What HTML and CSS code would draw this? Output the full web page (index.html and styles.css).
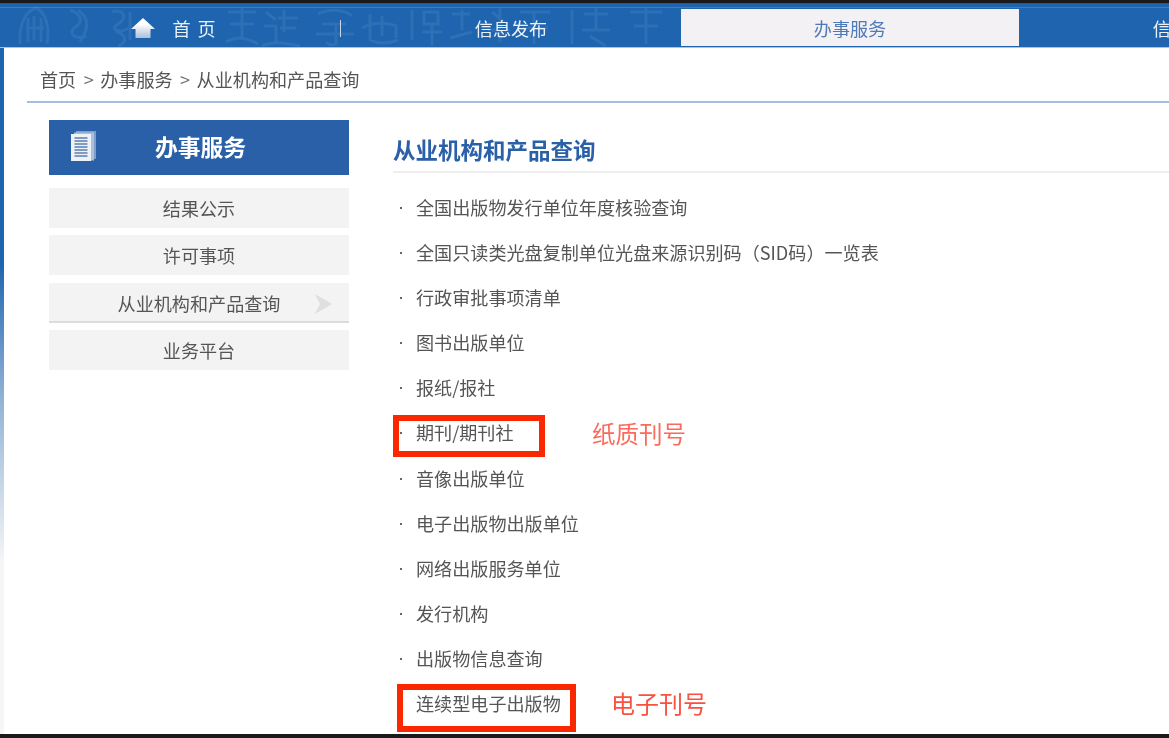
FILE: index.html
```html
<!DOCTYPE html>
<html lang="zh-CN">
<head>
<meta charset="utf-8">
<title>从业机构和产品查询</title>
<link rel="stylesheet" href="styles.css">
</head>
<body>
<div class="edge-top"></div>
<div class="page">
  <nav class="nav">
    <svg class="nav-decor" width="680" height="44" viewBox="0 0 680 44" aria-hidden="true">
      <path d="M20 40C19 22 24 8 36 4C46 8 50 24 47 40M28 14V38M34 12V36M41 14V38M26 24H44" />
      <path d="M70 6C82 10 84 18 74 24C68 30 76 36 86 32M78 6C90 14 88 26 80 38" />
      <path d="M112 8C124 4 128 14 118 20C108 26 122 30 128 24M116 28C126 30 128 38 118 42M130 8V36" />
      <path d="M228 8H256M242 4V34M230 20H254M226 38C236 32 248 34 258 40" />
      <path d="M266 8L276 16M264 22H276V38M262 42C276 36 290 40 300 42M284 6V28M278 14H298M280 24H296" />
      <path d="M318 10C330 4 346 6 352 12M322 20H346M336 20V40C332 42 328 40 326 38M316 30H354" />
      <path d="M362 24C372 18 388 18 396 22V34M370 10V36C378 40 388 40 398 36M382 12V32" />
      <path d="M412 6V36M424 8H438V20H424ZM422 28H442M432 20V42M452 10H470M462 6V26M450 34L472 28" />
      <path d="M492 8L504 18M500 4V38M488 26H510M520 8H550M534 8V40M522 24H548" />
      <path d="M572 6V40M584 10H608M596 4V26M582 26H610M590 32L606 42M630 8H662M646 4V40M634 22H658" />
    </svg>
    <a class="nav-item nav-home">
      <svg class="home-icon" width="24" height="20" viewBox="0 0 24 20">
        <defs><linearGradient id="hg" x1="0" y1="0" x2="0" y2="1"><stop offset="0.3" stop-color="#ffffff"/><stop offset="1" stop-color="#aebfd8"/></linearGradient></defs>
        <path d="M12 0 L24 11 L19.500 11 L19.500 20 L4.500 20 L4.500 11 L0 11 Z" fill="url(#hg)"/>
      </svg>
      <span class="home-text">首页</span>
    </a>
    <a class="nav-item">信息发布</a>
    <a class="nav-item nav-active">办事服务</a>
    <a class="nav-item">信息公开</a>
  </nav>
  <main class="content">
    <div class="crumbs"><span>首页</span><span class="sep">&gt;</span><span>办事服务</span><span class="sep">&gt;</span><span>从业机构和产品查询</span></div>
    <div class="columns">
      <aside class="side">
        <div class="side-head">
          <svg class="doc-icon" width="28" height="32" viewBox="0 0 28 32">
            <rect x="6" y="1" width="20" height="28" fill="#7f9fc9"/>
            <rect x="4" y="2.500" width="20" height="28" fill="#a9bfdc"/>
            <rect x="1" y="4" width="20" height="27" fill="#eef1f5"/>
            <path d="M4.500 8h13M4.500 11h13M4.500 14h13M4.500 17h13M4.500 20h13M4.500 23h13M4.500 26h13" stroke="#5b7fb0" stroke-width="1.500"/>
          </svg>
          <span class="side-title">办事服务</span>
        </div>
        <a class="side-item">结果公示</a>
        <a class="side-item">许可事项</a>
        <a class="side-item side-current">从业机构和产品查询
          <svg class="side-arrow" width="17" height="20" viewBox="0 0 17 20"><path d="M0 0 L17 10 L0 20 L5 10 Z" fill="#dfdfdf"/></svg>
        </a>
        <a class="side-item">业务平台</a>
      </aside>
      <section class="main">
        <h2 class="main-title">从业机构和产品查询</h2>
        <ul class="list">
          <li>全国出版物发行单位年度核验查询</li>
          <li>全国只读类光盘复制单位光盘来源识别码（SID码）一览表</li>
          <li>行政审批事项清单</li>
          <li>图书出版单位</li>
          <li>报纸/报社</li>
          <li>期刊/期刊社</li>
          <li>音像出版单位</li>
          <li>电子出版物出版单位</li>
          <li>网络出版服务单位</li>
          <li>发行机构</li>
          <li>出版物信息查询</li>
          <li>连续型电子出版物</li>
        </ul>
        <div class="mark mark-paper"></div>
        <div class="note note-paper">纸质刊号</div>
        <div class="mark mark-digital"></div>
        <div class="note note-digital">电子刊号</div>
      </section>
    </div>
  </main>
</div>
<div class="edge-bottom"></div>
</body>
</html>
```
FILE: styles.css
```css
* { box-sizing: border-box; }
html, body { margin: 0; height: 100%; }
body {
  display: flex;
  flex-direction: column;
  overflow: hidden;
  background: #fff;
  font-family: "Noto Sans CJK SC", "Liberation Sans", sans-serif;
  color: #555;
}
.edge-top { height: 3px; flex: none; background: #1a1a1a; }
.edge-bottom { height: 4px; flex: none; background: #1a1a1a; }
.page {
  flex: 1;
  min-height: 0;
  display: flex;
  flex-direction: column;
  background: linear-gradient(180deg, #1e64ae 0, #1e64ae 260px, #8db0d4 390px, #f6f6f6 560px);
  filter: blur(0.35px);
}
.nav {
  position: relative;
  flex: none;
  height: 45px;
  display: flex;
  padding: 5px 0 1px 1px;
  background: #1e64ae;
  border-top: 1px solid #1a5ca4;
  border-bottom: 1px solid #a9c3e6;
  overflow: hidden;
}
.nav::before {
  content: "";
  position: absolute;
  left: 0; right: 0; top: 3px;
  height: 1px;
  background: #3c7cc0;
}
.nav-decor {
  position: absolute;
  left: 0;
  top: 0;
  fill: none;
  stroke: rgba(150, 195, 240, 0.13);
  stroke-width: 3;
}
.nav-item {
  position: relative;
  flex: none;
  width: 340px;
  display: flex;
  align-items: center;
  justify-content: center;
  font-size: 18.100px;
  color: #eaf1f9;
}
.nav-home { gap: 17px; padding-left: 5px; }
.nav-home::after {
  content: "";
  position: absolute;
  right: 0;
  top: 11px;
  width: 1px;
  height: 17px;
  background: #c8d8ea;
}
.home-text { letter-spacing: 7px; margin-right: -7px; }
.nav-active {
  width: 338px;
  background: #f3f1f3;
  color: #4f7ab8;
}
.content {
  flex: 1;
  min-height: 0;
  margin-left: 4px;
  background: #fff;
  overflow: hidden;
}
.crumbs {
  display: flex;
  gap: 7.500px;
  margin-left: 23px;
  height: 55px;
  padding: 18px 0 0 13px;
  border-bottom: 2px solid #a6bede;
  font-size: 18.100px;
  line-height: 26px;
  color: #555;
}
.sep { width: 9px; color: #777; }
.columns {
  display: flex;
  padding: 17px 0 0 45px;
}
.side { flex: none; width: 300px; }
.side-head {
  position: relative;
  height: 55px;
  display: flex;
  align-items: center;
  justify-content: center;
  padding-bottom: 3px;
  margin-bottom: 13px;
  background: #2a60a8;
}
.doc-icon { position: absolute; left: 21px; top: 10px; }
.side-title {
  font-size: 22.800px;
  font-weight: 700;
  color: #fff;
  margin-left: 3px;
}
.side-item {
  position: relative;
  display: flex;
  align-items: center;
  justify-content: center;
  height: 40px;
  margin-bottom: 7.330px;
  background: #f3f3f3;
  font-size: 18.100px;
  color: #555;
}
.side-current {
  padding-top: 3px;
  border-bottom: 2px solid #dcdcdc;
}
.side-arrow { position: absolute; left: 266px; top: 11px; }
.main {
  position: relative;
  flex: 1;
  margin-left: 44px;
}
.main-title {
  margin: 0;
  height: 53px;
  padding-top: 12px;
  border-bottom: 2px solid #eeeeee;
  font-size: 22.500px;
  line-height: 34px;
  font-weight: 700;
  color: #2a60a8;
}
.list {
  list-style: none;
  margin: 0;
  padding: 12px 0 0;
}
.list li {
  position: relative;
  height: 45.100px;
  padding-left: 23px;
  font-size: 18.100px;
  line-height: 45px;
  color: #555;
}
.list li::before {
  content: "";
  position: absolute;
  left: 7px;
  top: 22px;
  width: 2px;
  height: 2px;
  background: #666;
}
.mark {
  position: absolute;
  border: 6px solid #f92800;
}
.mark-paper { left: 0; top: 295px; width: 152px; height: 42px; }
.mark-digital { left: 4px; top: 564px; width: 179px; height: 48px; }
.note { position: absolute; white-space: nowrap; }
.note-paper { left: 199px; top: 296px; font-size: 23.500px; line-height: 34px; color: #fb6a5a; }
.note-digital { left: 218px; top: 566px; font-size: 24px; line-height: 34px; color: #fa5040; }
```
